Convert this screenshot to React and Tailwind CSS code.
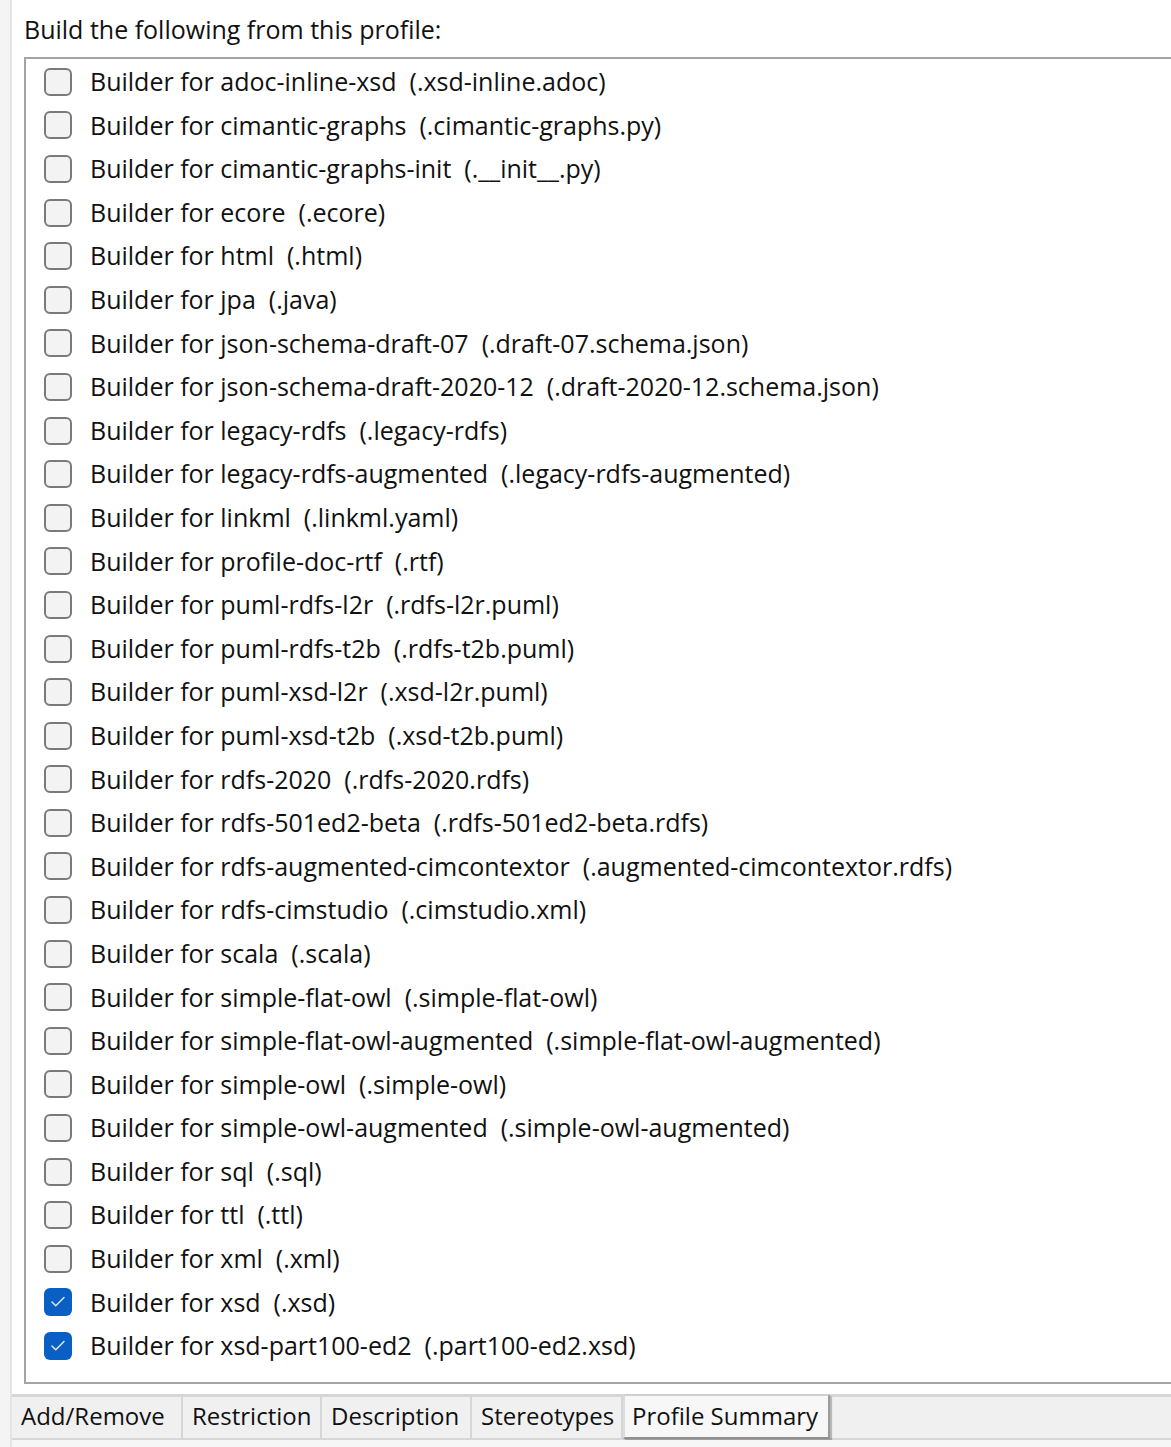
import { Check } from 'lucide-react';

const builders = [
  ['adoc-inline-xsd', '.xsd-inline.adoc'],
  ['cimantic-graphs', '.cimantic-graphs.py'],
  ['cimantic-graphs-init', '.__init__.py'],
  ['ecore', '.ecore'],
  ['html', '.html'],
  ['jpa', '.java'],
  ['json-schema-draft-07', '.draft-07.schema.json'],
  ['json-schema-draft-2020-12', '.draft-2020-12.schema.json'],
  ['legacy-rdfs', '.legacy-rdfs'],
  ['legacy-rdfs-augmented', '.legacy-rdfs-augmented'],
  ['linkml', '.linkml.yaml'],
  ['profile-doc-rtf', '.rtf'],
  ['puml-rdfs-l2r', '.rdfs-l2r.puml'],
  ['puml-rdfs-t2b', '.rdfs-t2b.puml'],
  ['puml-xsd-l2r', '.xsd-l2r.puml'],
  ['puml-xsd-t2b', '.xsd-t2b.puml'],
  ['rdfs-2020', '.rdfs-2020.rdfs'],
  ['rdfs-501ed2-beta', '.rdfs-501ed2-beta.rdfs'],
  ['rdfs-augmented-cimcontextor', '.augmented-cimcontextor.rdfs'],
  ['rdfs-cimstudio', '.cimstudio.xml'],
  ['scala', '.scala'],
  ['simple-flat-owl', '.simple-flat-owl'],
  ['simple-flat-owl-augmented', '.simple-flat-owl-augmented'],
  ['simple-owl', '.simple-owl'],
  ['simple-owl-augmented', '.simple-owl-augmented'],
  ['sql', '.sql'],
  ['ttl', '.ttl'],
  ['xml', '.xml'],
  ['xsd', '.xsd', true],
  ['xsd-part100-ed2', '.part100-ed2.xsd', true],
];

const tabs = [
  { label: 'Add/Remove', w: 'w-[171px]' },
  { label: 'Restriction', w: 'w-[139px]' },
  { label: 'Description', w: 'w-[150px]' },
  { label: 'Stereotypes', w: 'w-[151px]' },
];

function Box({ checked }) {
  return checked ? (
    <span className="flex h-[28px] w-[28px] items-center justify-center rounded-[6px] bg-[#0a5fc4]">
      <Check className="h-[18px] w-[18px] text-[#dce8f7]" strokeWidth={2} />
    </span>
  ) : (
    <span className="h-[28px] w-[28px] rounded-[6px] border-2 border-[#7a7a7a] bg-[#f3f3f3]" />
  );
}

export default function App() {
  return (
    <div className="flex h-[1447px] w-[1171px] overflow-hidden bg-white font-['Open_Sans',sans-serif] text-[#111]">
      <div className="w-[12px] shrink-0 border-r-2 border-[#e4e4e4] bg-[#f4f4f4]" />
      <div className="flex flex-1 flex-col">
        <div className="flex h-[57px] items-center pl-[12px] pt-[2px] text-[25px]">
          Build the following from this profile:
        </div>
        <div className="ml-[12px] h-[1327px] border-2 border-r-0 border-[#a4a4a4] bg-white pt-[1px]">
          {builders.map(([name, ext, checked]) => (
            <div key={name} className="flex h-[43.6px] items-center">
              <div className="ml-[18px] mr-[18px] flex">
                <Box checked={checked} />
              </div>
              <span className="whitespace-pre text-[25px]">
                {`Builder for ${name}  (${ext})`}
              </span>
            </div>
          ))}
        </div>
        <div className="h-[10px]" />
        <div className="flex h-[46px] border-t-[3px] border-b-2 border-[#d6d6d6] bg-[#f0f0f0]">
          {tabs.map((t) => (
            <div
              key={t.label}
              className={`${t.w} flex items-center border-r-2 border-[#d6d6d6] pb-[3px] pl-[9px] text-[24px]`}
            >
              {t.label}
            </div>
          ))}
          <div className="mt-[-3px] flex h-[45px] w-[207px] items-center rounded-t-[2px] border-2 border-t-[#cfcfcf] border-l-[#dcdcdc] border-r-[#9a9a9a] border-b-[#8f8f8f] bg-[#f7f7f7] pb-[2px] pl-[7px] text-[24px] shadow-[2px_2px_1px_rgba(0,0,0,0.25)]">
            Profile Summary
          </div>
        </div>
        <div className="flex-1 bg-[#f6f6f6]" />
      </div>
    </div>
  );
}
